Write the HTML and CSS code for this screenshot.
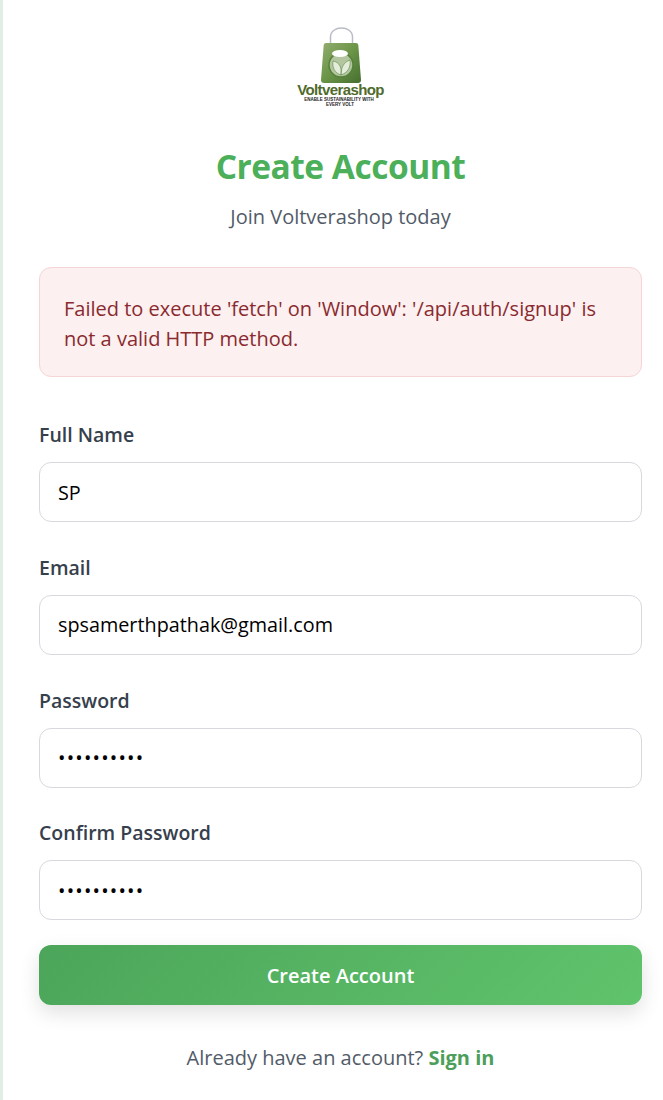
FILE: index.html
```html
<!DOCTYPE html>
<html lang="en">
<head>
<meta charset="utf-8">
<title>Create Account</title>
<link rel="stylesheet" href="styles.css">
</head>
<body>
<main class="card">
  <div class="logo">
    <svg class="logo-svg" width="90" height="84" viewBox="0 0 90 84">
      <defs>
        <linearGradient id="bag" x1="0" y1="0" x2="1" y2="1">
          <stop offset="0" stop-color="#93ad70"/>
          <stop offset="0.5" stop-color="#6a9447"/>
          <stop offset="1" stop-color="#466f30"/>
        </linearGradient>
      </defs>
      <path d="M34.5 24 V13 C34.5 1 56.5 1 56.5 13 V24" fill="none" stroke="#b9bcc4" stroke-width="1.5"/>
      <path d="M30 19 H60 Q62 19 62.3 21 L65 56 Q65 59 62 59 H28 Q25 59 25 56 L27.7 21 Q28 19 30 19 Z" fill="url(#bag)"/>
      <circle cx="45" cy="41" r="12" fill="#b4c6a0" stroke="#54803a" stroke-width="1.5"/>
      <ellipse cx="44" cy="29.5" rx="8" ry="3.6" fill="#fff"/>
      <path d="M45 51 C39 49 36 44 37 37 C43 38 46 43 45 51 C45 43 48 38 54 36 C55 44 51 49 45 51 Z" fill="#e4ecdc" stroke="#5d8a3e" stroke-width=".6"/>
      <text class="logo-name" x="44.5" y="71" text-anchor="middle">Voltverashop</text>
      <text class="logo-tag" x="43" y="77" text-anchor="middle">ENABLE SUSTAINABILITY WITH</text>
      <text class="logo-tag" x="44" y="82" text-anchor="middle">EVERY VOLT</text>
    </svg>
  </div>
  <h1 class="title">Create Account</h1>
  <p class="subtitle">Join Voltverashop today</p>
  <div class="error">Failed to execute 'fetch' on 'Window': '/api/auth/signup' is not a valid HTTP method.</div>
  <form class="form">
    <div class="field">
      <label class="label" for="name">Full Name</label>
      <input class="input" id="name" type="text" value="SP">
    </div>
    <div class="field">
      <label class="label" for="email">Email</label>
      <input class="input" id="email" type="text" value="spsamerthpathak@gmail.com">
    </div>
    <div class="field">
      <label class="label" for="pw">Password</label>
      <input class="input input-secret" id="pw" type="password" value="abcdefghij">
    </div>
    <div class="field">
      <label class="label" for="pw2">Confirm Password</label>
      <input class="input input-secret" id="pw2" type="password" value="abcdefghij">
    </div>
    <button class="submit" type="button">Create Account</button>
  </form>
  <p class="footer">Already have an account? <a class="link" href="#">Sign in</a></p>
</main>
</body>
</html>
```
FILE: styles.css
```css
* { box-sizing: border-box; }
html, body { margin: 0; height: 1100px; overflow: hidden; background: #fff; }
body {
  font-family: "Open Sans", "Noto Sans", "Liberation Sans", sans-serif;
  border-left: 3px solid #e0efe3;
}
.card { width: 603px; margin-left: 36px; }
.logo { height: 96px; padding-top: 24px; display: flex; justify-content: center; }
.logo-svg { display: block; flex: none; }
.logo-name { font: 700 15px "Liberation Sans", sans-serif; fill: #4f6b2c; letter-spacing: -0.6px; }
.logo-tag { font: 700 4.5px "Liberation Sans", sans-serif; fill: #222; }
.title { margin: 46px 0 0; height: 48px; line-height: 48px; font-size: 33.5px; font-weight: 700; color: #4caf5a; text-align: center; letter-spacing: -0.5px; }
.subtitle { margin: 12px 0 0; height: 30px; line-height: 30px; font-size: 20px; color: #525b68; text-align: center; }
.error { margin-top: 35px; height: 110px; padding: 26px 24px; line-height: 30px; font-size: 20px; color: #8a2a2f; background: #fcf0f0; border: 1px solid #f6d5d6; border-radius: 12px; }
.form { margin-top: 42px; display: flex; flex-direction: column; }
.field { height: 132.8px; display: flex; flex-direction: column; }
.label { height: 32px; line-height: 32px; font-size: 19.5px; font-weight: 600; color: #36404c; margin-bottom: 11px; }
.input { height: 60px; padding: 0 18px; font: 400 19.8px "Open Sans", "Noto Sans", sans-serif; color: #000; background: #fff; border: 1px solid #d8d9df; border-radius: 12px; outline: none; }
.input-secret { letter-spacing: 1.2px; }
.submit { margin-top: -5.2px; height: 60px; border: 0; border-radius: 12px; font: 600 20px "Open Sans", "Noto Sans", sans-serif; color: #fff; background: linear-gradient(135deg, #4ca55a, #60c46c); box-shadow: 0 8px 20px rgba(0, 0, 0, 0.12); }
.footer { margin: 37px 0 0; height: 32px; line-height: 32px; font-size: 20px; color: #525b68; text-align: center; }
.link { color: #4c9f5a; font-weight: 700; text-decoration: none; }
```
